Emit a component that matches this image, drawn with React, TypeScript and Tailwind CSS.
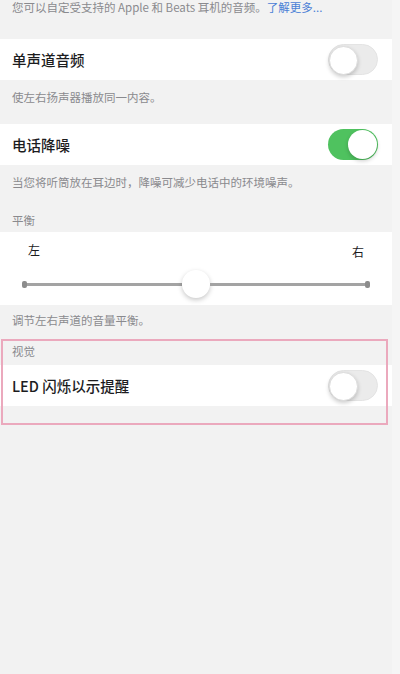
import React from "react";

const font = { fontFamily: '"Noto Sans CJK SC", "Noto Sans", sans-serif' };

function Toggle({ on }: { on?: boolean }) {
  return (
    <div
      className={`relative h-[31px] w-[50px] rounded-full ${
        on ? "bg-[#4fc25f]" : "border border-[#e4e4e4] bg-[#ebebeb]"
      }`}
    >
      <div
        className={`absolute top-[1px] h-[29px] w-[29px] rounded-full bg-white shadow-[0_2px_4px_rgba(0,0,0,0.2)] ${
          on ? "right-[1px]" : "left-0 top-0 border border-[#dcdcdc]"
        }`}
      />
    </div>
  );
}

function SwitchRow({ label, on }: { label: string; on?: boolean }) {
  return (
    <div className="flex h-[41px] items-center justify-between bg-white pl-3 pr-[14px]">
      <span className="text-[14.5px] font-medium text-[#1c1c1e]">{label}</span>
      <Toggle on={on} />
    </div>
  );
}

function Note({ children, className = "" }: { children: React.ReactNode; className?: string }) {
  return <p className={`px-3 text-[11.5px] leading-4 text-[#8a8a8e] ${className}`}>{children}</p>;
}

export default function App() {
  return (
    <div className="flex min-h-[674px] w-[400px] bg-[#f2f2f2]" style={font}>
      <div className="relative w-[392px]">
        <div className="h-[39px]">
          <Note className="pt-0 leading-[14px]">
            您可以自定受支持的 Apple 和 Beats 耳机的音频。<span className="text-[#4a80d6]">了解更多...</span>
          </Note>
        </div>

        <SwitchRow label="单声道音频" />
        <div className="h-[44px] pt-[9px]">
          <Note>使左右扬声器播放同一内容。</Note>
        </div>

        <SwitchRow label="电话降噪" on />
        <div className="h-[67px] pt-[9px]">
          <Note>当您将听筒放在耳边时，降噪可减少电话中的环境噪声。</Note>
          <Note className="pt-[22px]">平衡</Note>
        </div>

        <div className="h-[73px] bg-white px-[22px] pt-[10px]">
          <div className="flex justify-between px-[6px] text-[12px] leading-4 text-[#1c1c1e]">
            <span>左</span>
            <span className="pt-[2px]">右</span>
          </div>
          <div className="relative mt-[10px] flex h-[28px] items-center">
            <div className="h-[7px] w-[5px] rounded-[2px] bg-[#8c8c8c]" />
            <div className="h-[3px] flex-1 bg-[#a3a3a3]" />
            <div className="h-[28px] w-[28px] rounded-full bg-white shadow-[0_2px_5px_rgba(0,0,0,0.22)]" />
            <div className="h-[3px] flex-1 bg-[#a3a3a3]" />
            <div className="h-[7px] w-[5px] rounded-[2px] bg-[#8c8c8c]" />
          </div>
        </div>

        <div className="h-[60px] pt-[7px]">
          <Note>调节左右声道的音量平衡。</Note>
          <Note className="pt-[15px]">视觉</Note>
        </div>

        <SwitchRow label="LED 闪烁以示提醒" />

        <div className="pointer-events-none absolute left-[1px] top-[339px] h-[86px] w-[387px] border-2 border-[#eba9bd]" />
      </div>
      <div className="w-[8px] bg-[#f5f5f5]" />
    </div>
  );
}
